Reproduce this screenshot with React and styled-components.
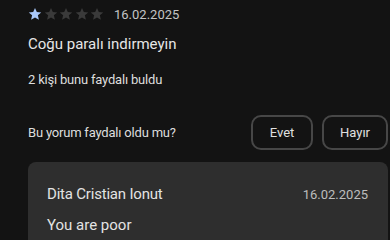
import React from 'react';
import styled, { createGlobalStyle } from 'styled-components';

const GlobalStyle = createGlobalStyle`
  html, body {
    margin: 0;
    padding: 0;
    background: #131313;
  }
  body {
    font-family: Roboto, "Liberation Sans", sans-serif;
    color: #e3e3e3;
  }
`;

const StyledReview = styled.main`
  width: 390px;
  height: 240px;
  overflow: hidden;
  padding: 6px 2px 0 28px;
  box-sizing: border-box;
`;

const StyledRatingRow = styled.div`
  display: flex;
  align-items: center;
  height: 16px;
`;

const StyledStars = styled.div`
  display: flex;
  gap: 1.5px;
  margin-right: 10px;
`;

const StyledDate = styled.span`
  font-size: 13px;
  color: ${props => (props.dim ? '#bdbdbd' : '#c4c4c4')};
`;

const StyledTitle = styled.h2`
  font-size: 15px;
  font-weight: 400;
  color: #e6e6e6;
  margin: 12px 0 0;
  line-height: 20px;
`;

const StyledHelpfulCount = styled.p`
  font-size: 13px;
  letter-spacing: -0.2px;
  color: #dedede;
  margin: 18px 0 0;
  line-height: 16px;
`;

const StyledQuestionRow = styled.div`
  display: flex;
  align-items: center;
  margin-top: 27px;
`;

const StyledQuestion = styled.span`
  font-size: 13px;
  letter-spacing: -0.2px;
  color: #dedede;
  flex: 1;
`;

const StyledButtons = styled.div`
  display: flex;
  gap: 9px;
`;

const StyledButton = styled.button`
  width: ${props => props.width}px;
  height: 35px;
  border: 2px solid #474747;
  border-radius: 10px;
  background: transparent;
  color: #e0e0e0;
  font-family: Roboto, "Liberation Sans", sans-serif;
  font-size: 13px;
  padding: 0;
`;

const StyledReply = styled.section`
  margin-top: 12px;
  background: #2e2e2e;
  border-radius: 8px;
  padding: 23px 20px 20px 19px;
`;

const StyledReplyHeader = styled.div`
  display: flex;
  justify-content: space-between;
  align-items: center;
`;

const StyledReplyAuthor = styled.span`
  font-size: 15px;
  letter-spacing: -0.2px;
  color: #e3e3e3;
`;

const StyledReplyText = styled.p`
  margin: 13px 0 0;
  font-size: 15px;
  color: #e3e3e3;
`;

const Star = ({ filled }) => (
  <svg width="14" height="14" viewBox="0 0 24 24">
    <path
      d="M12 1.5l3.1 7.1 7.6.7-5.8 5 1.8 7.5L12 17.8l-6.7 4 1.8-7.5-5.8-5 7.6-.7z"
      fill={filled ? '#a8c7fa' : '#3a3a3a'}
    />
  </svg>
);

const App = () => (
  <React.Fragment>
    <GlobalStyle />
    <StyledReview>
      <StyledRatingRow>
        <StyledStars>
          {[1, 2, 3, 4, 5].map(n => (
            <Star key={n} filled={n === 1} />
          ))}
        </StyledStars>
        <StyledDate>16.02.2025</StyledDate>
      </StyledRatingRow>
      <StyledTitle>Coğu paralı indirmeyin</StyledTitle>
      <StyledHelpfulCount>2 kişi bunu faydalı buldu</StyledHelpfulCount>
      <StyledQuestionRow>
        <StyledQuestion>Bu yorum faydalı oldu mu?</StyledQuestion>
        <StyledButtons>
          <StyledButton width={62}>Evet</StyledButton>
          <StyledButton width={66}>Hayır</StyledButton>
        </StyledButtons>
      </StyledQuestionRow>
      <StyledReply>
        <StyledReplyHeader>
          <StyledReplyAuthor>Dita Cristian Ionut</StyledReplyAuthor>
          <StyledDate dim>16.02.2025</StyledDate>
        </StyledReplyHeader>
        <StyledReplyText>You are poor</StyledReplyText>
      </StyledReply>
    </StyledReview>
  </React.Fragment>
);

export default App;
